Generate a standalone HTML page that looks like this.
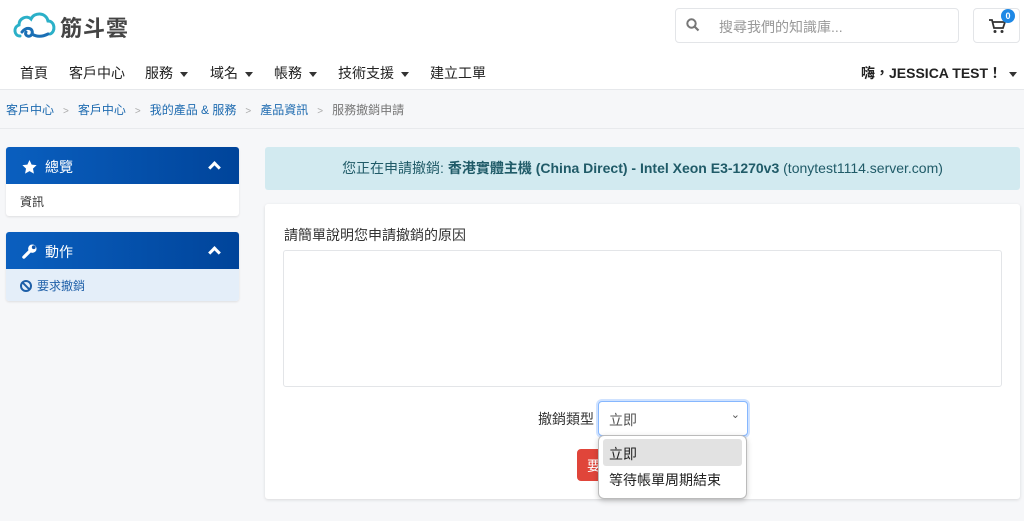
<!DOCTYPE html>
<html><head><meta charset="utf-8"><style>
*{box-sizing:border-box;margin:0;padding:0}
body{width:1024px;height:521px;overflow:hidden;background:#f6f7f9;font-family:"Liberation Sans","Noto Sans CJK TC",sans-serif;color:#333;position:relative}
.hdr{position:absolute;left:0;top:0;width:1024px;height:90px;background:#fff;border-bottom:1px solid #e6e8eb}
.abs{position:absolute}
.nav span{position:absolute;top:63px;font-size:14px;color:#222;white-space:nowrap}
.caret{display:inline-block;border-left:4px solid transparent;border-right:4px solid transparent;border-top:5px solid #333;vertical-align:middle;margin-left:7px}
.bc{position:absolute;top:101px;left:6px;font-size:12px;color:#1e6bb0;white-space:nowrap}
.bc i{font-style:normal;color:#aaa;margin:0 9px;font-size:10px}
.panel{position:absolute;left:6px;width:233px;background:#fff;box-shadow:0 1px 2px rgba(0,0,0,.1);border-radius:3px;overflow:hidden}
.ph{height:37px;background:linear-gradient(90deg,#0a5fbf,#00449a);color:#fff;font-size:14px;padding:10px 0 0 16px;position:relative}
.chev{position:absolute;right:20px;top:16px;width:9px;height:9px;border-left:3px solid #fff;border-top:3px solid #fff;transform:rotate(45deg)}
</style></head><body>
<div class="hdr"></div>
<svg class="abs" style="left:12px;top:10px" width="46" height="32" viewBox="0 0 46 32"><path d="M8 26 C2 26 1 17 7 15 C7 8 15 5 19 9 C22 2 34 2 36 11 C43 11 44 22 38 24" fill="none" stroke="#2bb0c8" stroke-width="3" stroke-linecap="round"/><path d="M10 22 C14 16 22 18 20 24 C18 28 12 26 14 22 M20 24 C26 28 32 26 36 24" fill="none" stroke="#1a6fb5" stroke-width="3" stroke-linecap="round"/></svg>
<div class="abs" style="left:60px;top:11px;font-size:22px;font-weight:bold;color:#444;letter-spacing:1px">筋斗雲</div>
<div class="abs" style="left:675px;top:8px;width:284px;height:35px;border:1px solid #e3e5e8;border-radius:4px;background:#fff"></div>
<svg class="abs" style="left:686px;top:18px" width="14" height="14" viewBox="0 0 14 14"><circle cx="5.5" cy="5.5" r="4.2" fill="none" stroke="#777" stroke-width="2"/><path d="M8.5 8.5 L12.5 12.5" stroke="#777" stroke-width="2.2"/></svg>
<div class="abs" style="left:719px;top:17px;font-size:14px;color:#999">搜尋我們的知識庫...</div>
<div class="abs" style="left:973px;top:8px;width:47px;height:35px;border:1px solid #e3e5e8;border-radius:4px;background:#fff"></div>
<svg class="abs" style="left:988px;top:18px" width="18" height="16" viewBox="0 0 18 16"><path d="M1 2h3l2 8h9l2-6H5" fill="none" stroke="#333" stroke-width="1.8"/><circle cx="7" cy="13.5" r="1.5" fill="#333"/><circle cx="14" cy="13.5" r="1.5" fill="#333"/></svg>
<div class="abs" style="left:1001px;top:9px;width:14px;height:14px;border-radius:50%;background:#1e88e5;color:#fff;font-size:9px;font-weight:bold;text-align:center;line-height:14px">0</div>
<div class="nav">
<span style="left:20px">首頁</span><span style="left:69px">客戶中心</span><span style="left:145px">服務<i class="caret"></i></span><span style="left:210px">域名<i class="caret"></i></span><span style="left:274px">帳務<i class="caret"></i></span><span style="left:338px">技術支援<i class="caret"></i></span><span style="left:430px">建立工單</span>
<span style="left:861px;font-weight:bold">嗨，JESSICA TEST！<i class="caret"></i></span>
</div>
<div class="bc">客戶中心<i>&gt;</i>客戶中心<i>&gt;</i>我的產品 &amp; 服務<i>&gt;</i>產品資訊<i>&gt;</i><span style="color:#777">服務撤銷申請</span></div>
<div class="abs" style="left:0;top:128px;width:1024px;height:1px;background:#e8eaed"></div>

<div class="panel" style="top:147px;height:69px"><div class="ph"><svg width="15" height="14" viewBox="0 0 24 23" style="vertical-align:-2px;margin-right:8px"><path d="M12 0l3.5 7.5 8.2 1-6 5.7 1.6 8.1L12 18.3 4.7 22.3l1.6-8.1-6-5.7 8.2-1z" fill="#fff"/></svg>總覽<div class="chev"></div></div><div style="font-size:12px;padding:9px 14px">資訊</div></div>
<div class="panel" style="top:232px;height:69px"><div class="ph"><svg width="15" height="15" viewBox="0 0 16 16" style="vertical-align:-2px;margin-right:8px"><path d="M2 14 L8 8" stroke="#fff" stroke-width="3.5" stroke-linecap="round"/><circle cx="11" cy="5" r="4.5" fill="#fff"/><circle cx="12.5" cy="3.5" r="2" fill="#0a55b0"/></svg>動作<div class="chev"></div></div><div style="font-size:12px;padding:8px 14px;background:#e4eef9;color:#1e5fa8;height:32px"><span style="display:inline-block;width:12px;height:12px;border:2px solid #1e5fa8;border-radius:50%;vertical-align:-2px;position:relative;margin-right:5px"><span style="position:absolute;left:3px;top:-1px;width:2px;height:10px;background:#1e5fa8;transform:rotate(-45deg)"></span></span>要求撤銷</div></div>

<div class="abs" style="left:265px;top:147px;width:755px;height:43px;background:#d2eaf0;border-radius:3px;color:#205b68;font-size:14px;text-align:center;line-height:43px">您正在申請撤銷: <b>香港實體主機 (China Direct) - Intel Xeon E3-1270v3</b> (tonytest1114.server.com)</div>
<div class="abs" style="left:265px;top:204px;width:755px;height:295px;background:#fff;border-radius:3px;box-shadow:0 1px 3px rgba(0,0,0,.12)"></div>
<div class="abs" style="left:284px;top:225px;font-size:14px;color:#333">請簡單說明您申請撤銷的原因</div>
<div class="abs" style="left:283px;top:250px;width:719px;height:137px;border:1px solid #e3e5e8;border-radius:3px"></div>
<div class="abs" style="left:538px;top:409px;font-size:14px;color:#333">撤銷類型</div>
<div class="abs" style="left:598px;top:401px;width:150px;height:35px;border:1px solid #86b7fe;border-radius:4px;box-shadow:0 0 0 2px #cfe2ff;background:#fff;font-size:14px;color:#555;padding:8px 10px">立即<span style="position:absolute;right:7px;top:6px;font-size:11px">⌄</span></div>
<div class="abs" style="left:577px;top:449px;width:60px;height:32px;background:#e0453a;border-radius:4px;color:#fff;font-size:14px;padding:7px 10px">要</div>
<div class="abs" style="left:598px;top:435px;width:149px;height:64px;background:#fff;border:1px solid #bbb;border-radius:6px;box-shadow:0 2px 6px rgba(0,0,0,.2);font-size:14px;color:#222">
<div style="margin:3px 4px 0;height:27px;background:#e2e2e2;border-radius:3px;padding:5px 6px">立即</div>
<div style="padding:4px 10px">等待帳單周期結束</div></div>
</body></html>
